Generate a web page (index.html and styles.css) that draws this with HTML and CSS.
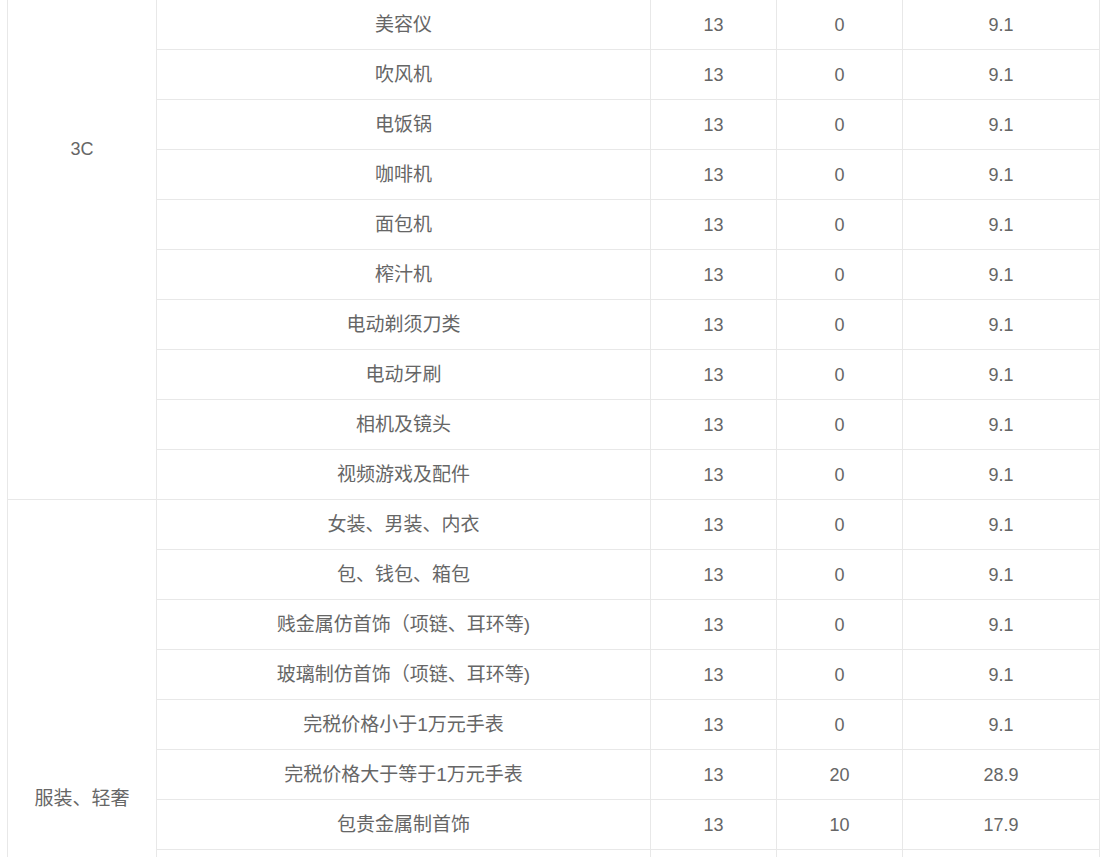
FILE: index.html
```html
<!DOCTYPE html>
<html lang="zh-CN">
<head>
<meta charset="utf-8">
<link rel="stylesheet" href="styles.css">
</head>
<body>
<table class="rates">
  <colgroup>
    <col class="c-cat">
    <col class="c-item">
    <col class="c-num">
    <col class="c-num">
    <col class="c-total">
  </colgroup>
  <tbody>
    <tr><td class="cat cat-3c" rowspan="10">3C</td><td class="item">美容仪</td><td>13</td><td>0</td><td>9.1</td></tr>
    <tr><td class="item">吹风机</td><td>13</td><td>0</td><td>9.1</td></tr>
    <tr><td class="item">电饭锅</td><td>13</td><td>0</td><td>9.1</td></tr>
    <tr><td class="item">咖啡机</td><td>13</td><td>0</td><td>9.1</td></tr>
    <tr><td class="item">面包机</td><td>13</td><td>0</td><td>9.1</td></tr>
    <tr><td class="item">榨汁机</td><td>13</td><td>0</td><td>9.1</td></tr>
    <tr><td class="item">电动剃须刀类</td><td>13</td><td>0</td><td>9.1</td></tr>
    <tr><td class="item">电动牙刷</td><td>13</td><td>0</td><td>9.1</td></tr>
    <tr><td class="item">相机及镜头</td><td>13</td><td>0</td><td>9.1</td></tr>
    <tr><td class="item">视频游戏及配件</td><td>13</td><td>0</td><td>9.1</td></tr>
    <tr><td class="cat cat-fashion item" rowspan="8">服装、轻奢</td><td class="item">女装、男装、内衣</td><td>13</td><td>0</td><td>9.1</td></tr>
    <tr><td class="item">包、钱包、箱包</td><td>13</td><td>0</td><td>9.1</td></tr>
    <tr><td class="item">贱金属仿首饰（项链、耳环等)</td><td>13</td><td>0</td><td>9.1</td></tr>
    <tr><td class="item">玻璃制仿首饰（项链、耳环等)</td><td>13</td><td>0</td><td>9.1</td></tr>
    <tr><td class="item">完税价格小于1万元手表</td><td>13</td><td>0</td><td>9.1</td></tr>
    <tr><td class="item">完税价格大于等于1万元手表</td><td>13</td><td>20</td><td>28.9</td></tr>
    <tr><td class="item">包贵金属制首饰</td><td>13</td><td>10</td><td>17.9</td></tr>
    <tr><td></td><td></td><td></td><td></td></tr>
  </tbody>
</table>
</body>
</html>
```

FILE: styles.css
```css
html, body {
  margin: 0;
  padding: 0;
  background: #fff;
}
body {
  padding-left: 7px;
  font-family: "Liberation Sans", "Noto Sans CJK SC", sans-serif;
  font-size: 18px;
  color: #666;
}
.rates {
  margin-top: -1px;
  width: 1092px;
  border-collapse: collapse;
  table-layout: fixed;
}
.c-cat { width: 149px; }
.c-item { width: 494px; }
.c-num { width: 126px; }
.c-total { width: 197px; }
.rates td {
  border: 1px solid #e8e8e8;
  height: 49px;
  padding: 0;
  text-align: center;
  vertical-align: middle;
  line-height: 20px;
}
.rates td.item {
  font-size: 19px;
}
.rates td.cat {
  vertical-align: top;
}
.rates td.cat-3c {
  padding-top: 139px;
}
.rates td.cat-fashion {
  padding-top: 289px;
}
```
